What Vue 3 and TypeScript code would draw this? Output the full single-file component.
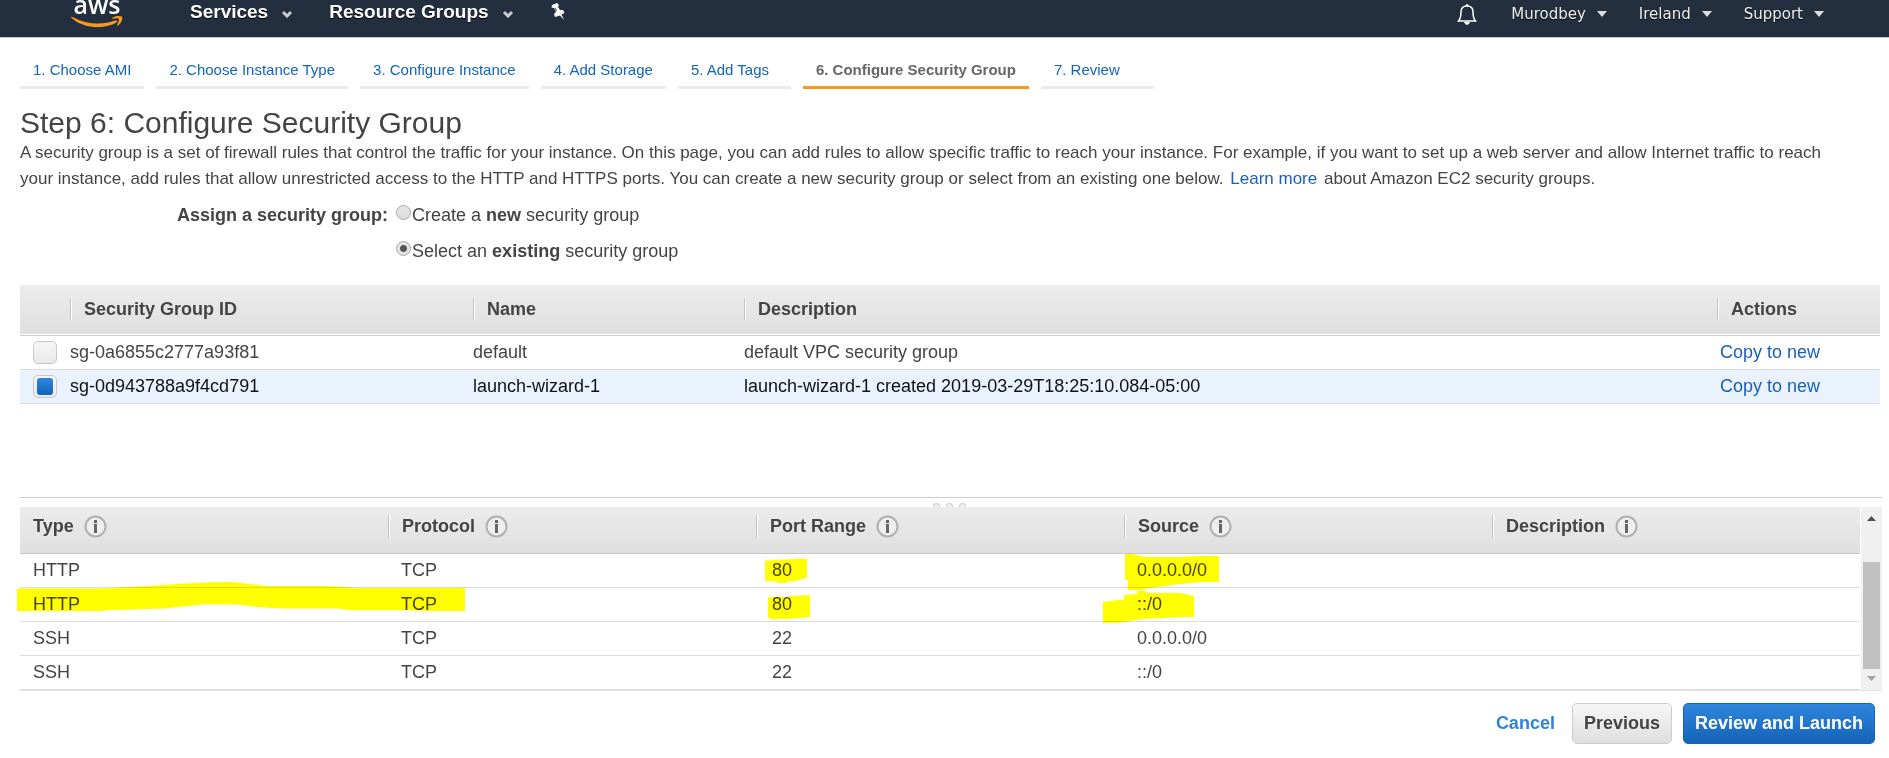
<script setup lang="ts">
import { ref } from 'vue'

interface Tab { label: string; active?: boolean }
interface Group { id: string; name: string; description: string; selected: boolean }
interface Rule { type: string; protocol: string; port: string; source: string }

const tabs: Tab[] = [
  { label: '1. Choose AMI' },
  { label: '2. Choose Instance Type' },
  { label: '3. Configure Instance' },
  { label: '4. Add Storage' },
  { label: '5. Add Tags' },
  { label: '6. Configure Security Group', active: true },
  { label: '7. Review' },
]
const accountMenus = ['Murodbey', 'Ireland', 'Support']
const assign = ref<'new' | 'existing'>('existing')
const groups = ref<Group[]>([
  { id: 'sg-0a6855c2777a93f81', name: 'default', description: 'default VPC security group', selected: false },
  { id: 'sg-0d943788a9f4cd791', name: 'launch-wizard-1', description: 'launch-wizard-1 created 2019-03-29T18:25:10.084-05:00', selected: true },
])
const ruleColumns = ['Type', 'Protocol', 'Port Range', 'Source', 'Description']
const rules: Rule[] = [
  { type: 'HTTP', protocol: 'TCP', port: '80', source: '0.0.0.0/0' },
  { type: 'HTTP', protocol: 'TCP', port: '80', source: '::/0' },
  { type: 'SSH', protocol: 'TCP', port: '22', source: '0.0.0.0/0' },
  { type: 'SSH', protocol: 'TCP', port: '22', source: '::/0' },
]
</script>

<template>
  <div class="page">
    <header class="navbar">
      <a class="logo" href="#" aria-label="aws">
        <span class="logo-word">aws</span>
        <svg class="smile" width="52" height="14" viewBox="0 0 52 14" aria-hidden="true">
          <path d="M0 2.500 Q0 1.500 1.500 2 C16 10 32 10 44 5.500 Q47 5 46 7 C36 14 13 15 0 2.500 Z" fill="#f7981f" />
          <path d="M41 3 C44 0.500 49 0.500 51 1.500 C52 4 50.500 8 47 10.500 C46 11 46 10 46.500 9 C47.500 6.500 48.500 4.500 47.500 3.800 C46.500 3 43.500 3.500 41.500 3.800 Z" fill="#f7981f" />
        </svg>
      </a>
      <nav class="main-menu">
        <button class="menu" type="button">Services
          <svg width="12" height="8" viewBox="0 0 12 8" aria-hidden="true"><path d="M2 2 L6 6 L10 2" /></svg>
        </button>
        <button class="menu" type="button">Resource Groups
          <svg width="12" height="8" viewBox="0 0 12 8" aria-hidden="true"><path d="M2 2 L6 6 L10 2" /></svg>
        </button>
        <button class="icon-button" type="button" aria-label="Pin shortcuts">
          <svg width="16" height="17" viewBox="0 0 16 17" aria-hidden="true">
            <path d="M2 2 L7 0 L9 2 L8 4 L10 7 L13 7 L14.500 10 L11.500 11.500 L14 17 L10 12.500 L5 14 L4 11 L6 9 L4 5 L1.500 4.500 Z" fill="#fff" />
            <path d="M5 5 L6.500 8" fill="none" stroke="#232f3e" stroke-width="1" />
          </svg>
        </button>
      </nav>
      <nav class="account-menu">
        <button class="icon-button bell" type="button" aria-label="Notifications">
          <svg width="20" height="22" viewBox="0 0 20 22" aria-hidden="true">
            <path d="M1.500 18 C4 15 4 13 4 9 C4 5 6 3 10 3 C14 3 16 5 16 9 C16 13 16 15 18.500 18 Z" fill="none" stroke="#fff" stroke-width="1.500" />
            <path d="M8 3 Q10 -1 12 3 Z M7 19 H13 Q12 22 10 22 Q8 22 7 19 Z" fill="#fff" />
          </svg>
        </button>
        <button v-for="m in accountMenus" :key="m" class="account" type="button">{{ m }}
          <svg width="10" height="6" viewBox="0 0 10 6" aria-hidden="true"><path d="M0 0 H10 L5 6 Z" fill="#ddd" /></svg>
        </button>
      </nav>
    </header>

    <nav class="tabs">
      <a v-for="t in tabs" :key="t.label" href="#" class="tab" :class="{ active: t.active }">{{ t.label }}</a>
    </nav>

    <main class="content">
      <h1>Step 6: Configure Security Group</h1>
      <p class="intro">
        A security group is a set of firewall rules that control the traffic for your instance. On this page, you can add rules to allow specific traffic to reach your instance. For example, if you want to set up a web server and allow Internet traffic to reach your instance, add rules that allow unrestricted access to the HTTP and HTTPS ports. You can create a new security group or select from an existing one below. <a class="learn" href="#">Learn more</a> about Amazon EC2 security groups.
      </p>

      <div class="assign" role="radiogroup" aria-labelledby="assign-label">
        <strong id="assign-label">Assign a security group:</strong>
        <div class="options">
          <label><input v-model="assign" type="radio" name="assign" value="new"><span>Create a <b>new</b> security group</span></label>
          <label><input v-model="assign" type="radio" name="assign" value="existing"><span>Select an <b>existing</b> security group</span></label>
        </div>
      </div>

      <table class="groups">
        <colgroup><col class="c-check"><col class="c-id"><col class="c-name"><col><col class="c-actions"></colgroup>
        <thead>
          <tr>
            <td></td>
            <th><span>Security Group ID</span></th>
            <th><span>Name</span></th>
            <th><span>Description</span></th>
            <th><span>Actions</span></th>
          </tr>
        </thead>
        <tbody>
          <tr v-for="g in groups" :key="g.id" :class="{ selected: g.selected }">
            <td class="check"><input v-model="g.selected" type="checkbox" :aria-label="g.id"></td>
            <td>{{ g.id }}</td>
            <td>{{ g.name }}</td>
            <td>{{ g.description }}</td>
            <td class="action"><a href="#">Copy to new</a></td>
          </tr>
        </tbody>
      </table>
    </main>

    <section class="rules-pane">
      <div class="splitter"><i></i><i></i><i></i></div>
      <div class="rules-body">
        <div class="rules-wrap">
          <table class="rules">
            <thead>
              <tr>
                <th v-for="c in ruleColumns" :key="c">
                  <span>{{ c }}
                    <svg width="23" height="23" viewBox="0 0 23 23" aria-hidden="true">
                      <circle cx="11.500" cy="11.500" r="10" fill="#efefef" stroke="#b0b0b0" stroke-width="2" />
                      <path d="M10 5 H13 V8 H10 Z M10 9 H13 V18 H10 Z" fill="#666" />
                    </svg>
                  </span>
                </th>
              </tr>
            </thead>
            <tbody>
              <tr v-for="(r, i) in rules" :key="i">
                <td>{{ r.type }}</td>
                <td>{{ r.protocol }}</td>
                <td class="port">{{ r.port }}</td>
                <td>{{ r.source }}</td>
                <td></td>
              </tr>
            </tbody>
          </table>
          <svg class="marker row-mark" viewBox="0 0 448 36" preserveAspectRatio="none" aria-hidden="true">
            <path d="M0 8 H80 L120 6 L168 2 L204 0 H216 L250 5 H310 L340 7 H448 V36 H397 V35 H336 L320 33 H266 L240 31 L220 28 H185 L148 33 L88 35 V36 H0 Z" />
          </svg>
          <svg class="marker port-mark-a" viewBox="0 0 42 28" preserveAspectRatio="none" aria-hidden="true">
            <path d="M0 2 L16 1 L32 0 H42 V22 L30 26 H22 V28 H12 V26 H0 Z" />
          </svg>
          <svg class="marker port-mark-b" viewBox="0 0 42 24" preserveAspectRatio="none" aria-hidden="true">
            <path d="M0 2 H22 V1 L42 0 V22 L20 24 H2 L0 22 Z" />
          </svg>
          <svg class="marker source-mark-a" viewBox="0 0 94 36" preserveAspectRatio="none" aria-hidden="true">
            <path d="M0 0 H8 L20 3 H56 L70 2 H94 V28 H78 L54 30 L18 35 V36 H3 V26 H0 Z" />
          </svg>
          <svg class="marker source-mark-b" viewBox="0 0 91 32" preserveAspectRatio="none" aria-hidden="true">
            <path d="M0 11 L16 9 H21 V4 L34 3 V0 H43 V2 H78 L91 5 V26 H78 L40 28 L14 32 H0 Z" />
          </svg>
        </div>
        <div class="scrollbar" aria-hidden="true">
          <svg width="9" height="5" viewBox="0 0 9 5"><path d="M0 5 L4.500 0 L9 5 Z" fill="#505050" /></svg>
          <div class="thumb"></div>
          <svg width="9" height="5" viewBox="0 0 9 5"><path d="M0 0 L4.500 5 L9 0 Z" fill="#a3a3a3" /></svg>
        </div>
      </div>
    </section>

    <footer class="actions">
      <button class="cancel" type="button">Cancel</button>
      <button class="btn" type="button">Previous</button>
      <button class="btn primary" type="button">Review and Launch</button>
    </footer>
  </div>
</template>

<style>
body { background: #fff; }
</style>

<style scoped>
.page {
  font-family: "Liberation Sans", Arial, sans-serif;
  font-size: 18px;
  color: #444;
  overflow: hidden;
}
.page * { box-sizing: border-box; }
a { color: #1a5fbe; text-decoration: none; }
button { font: inherit; background: none; border: 0; padding: 0; margin: 0; color: inherit; cursor: pointer; }

.navbar {
  display: flex;
  align-items: flex-start;
  height: 38px;
  padding: 0 65px 0 71px;
  background: #232f3e;
  border-bottom: 1px solid #c4c7ca;
  color: #fff;
}
.logo { display: flex; flex-direction: column; align-items: center; gap: 7px; width: 52px; }
.logo-word { font-family: "Open Sans", sans-serif; font-size: 25px; font-weight: 600; line-height: 8px; color: #fff; }
.smile { flex: none; }
.main-menu { display: flex; align-items: center; height: 23px; margin-left: 67px; gap: 36px; }
.menu { display: flex; align-items: center; gap: 13px; font-size: 19px; font-weight: bold; line-height: 23px; text-shadow: 0 1px 0 #000; }
.menu svg { margin-top: 4px; }
.menu svg path { fill: none; stroke: #ccc; stroke-width: 3; }
.icon-button { display: flex; }
.account-menu { display: flex; align-items: center; height: 27px; margin-left: auto; gap: 32px; }
.bell { margin-right: 2px; }
.account { display: flex; align-items: center; gap: 11px; font-family: "DejaVu Sans", Verdana, sans-serif; font-size: 15px; color: #eee; text-shadow: 0 1px 0 #000; }

.tabs { display: flex; gap: 12px; margin: 16px 20px 0; }
.tab { min-width: 113px; height: 35px; padding: 0 13px; font-size: 15px; line-height: 32px; border-bottom: 3px solid #eaeaea; white-space: nowrap; color: #1166bb; }
.tab.active { color: #666; font-weight: bold; border-color: #ff9914; }

.content { padding: 16px 9px 0 20px; }
h1 { margin: 0; font-size: 30px; font-weight: normal; line-height: 35px; }
.intro { margin: 0; padding-right: 24px; font-size: 17px; line-height: 26px; }
.learn { margin: 0 2px; }
.assign { display: flex; margin: 10px 0 0 157px; line-height: 26px; gap: 8px; }
.options { display: flex; flex-direction: column; gap: 10px; }
.options label { display: flex; }
.options input {
  appearance: none; width: 15px; height: 15px; margin: 3px 1px 0 0;
  border: 1px solid #aaa; border-radius: 50%; background: linear-gradient(#e6e6e6, #dcdcdc);
}
.options input:checked { background: radial-gradient(circle, #555 0 3px, #e4e4e4 4px); }

table { width: 100%; border-collapse: separate; border-spacing: 0; table-layout: fixed; }
th, td { padding: 0; text-align: left; font-weight: normal; white-space: nowrap; }
th { font-weight: bold; }
thead th, thead td { background: linear-gradient(#ececec, #dfdfdf); }
.groups { margin-top: 21px; }
.groups thead th, .groups thead td { height: 51px; padding-bottom: 2px; border-bottom: 1px solid #ccc; box-shadow: inset 0 -1px #fff; }
th span { display: flex; align-items: center; height: 22px; padding-left: 13px; border-left: 1px solid #c4c4c4; box-shadow: inset 1px 0 #fff; }
.c-check { width: 50px; }
.c-id { width: 403px; }
.c-name { width: 271px; }
.c-actions { width: 163px; }
.groups tbody td { height: 34px; border-bottom: 1px solid #ddd; }
.groups .check { padding-left: 13px; }
.groups .action { padding-left: 3px; }
.check input {
  display: block; appearance: none; width: 24px; height: 23px; margin: 0; padding: 2px 3px;
  border: 1px solid #c8c8c8; border-radius: 5px; background: linear-gradient(#f6f6f6, #e9e9e9);
}
.check input:checked::before { content: ""; display: block; width: 16px; height: 17px; border-radius: 3px; background: linear-gradient(#2f86dc, #1463b8); }
.selected td { background: #eaf2fe; color: #111; }

.rules-pane { margin: 93px 7px 0 20px; border-top: 1px solid #ccc; }
.splitter { display: flex; justify-content: center; align-items: flex-end; gap: 6px; height: 9px; padding-right: 3px; overflow: hidden; }
.splitter i { width: 7px; height: 4px; border: 1px solid #ccc; border-bottom: 0; border-radius: 4px 4px 0 0; background: #eee; }
.rules-body { display: flex; border-bottom: 1px solid #e4e4e4; }
.rules-wrap { position: relative; flex: 1; min-width: 0; margin-right: 1px; }
.rules thead th { height: 47px; padding-bottom: 7px; border-bottom: 1px solid #c8c8c8; }
.rules th span { height: 24px; gap: 10px; }
.rules th:first-child span { border-left: 0; box-shadow: none; }
.rules tbody td { height: 34px; padding-left: 13px; border-bottom: 1px solid #ddd; }
.rules tbody .port { padding-left: 16px; }

/* Highlighter strokes drawn over the table */
.marker { position: absolute; fill: #ff0; mix-blend-mode: multiply; pointer-events: none; }
.row-mark { left: -3px; top: 75px; width: 448px; height: 29px; }
.port-mark-a { left: 745px; top: 52px; width: 42px; height: 24px; }
.port-mark-b { left: 748px; top: 88px; width: 42px; height: 24px; }
.source-mark-a { left: 1105px; top: 47px; width: 94px; height: 36px; }
.source-mark-b { left: 1083px; top: 84px; width: 91px; height: 32px; }

.scrollbar { display: flex; flex-direction: column; align-items: center; width: 21px; padding: 9px 0; background: #f0f0f0; }
.thumb { width: 17px; height: 107px; margin: auto 0 7px; background: #c1c1c1; }

.actions { display: flex; justify-content: flex-end; align-items: center; padding: 12px 14px 0; font-weight: bold; }
.cancel { margin-right: 17px; color: #2f82dd; font-weight: bold; }
.btn { height: 41px; padding: 0 11px; border: 1px solid #ccc; border-radius: 5px; background: linear-gradient(#f6f6f6, #dfdfdf); font-weight: bold; }
.primary { margin-left: 11px; border-color: #1166bb; background: linear-gradient(#2f86dc, #1463b8); color: #fff; }
</style>
